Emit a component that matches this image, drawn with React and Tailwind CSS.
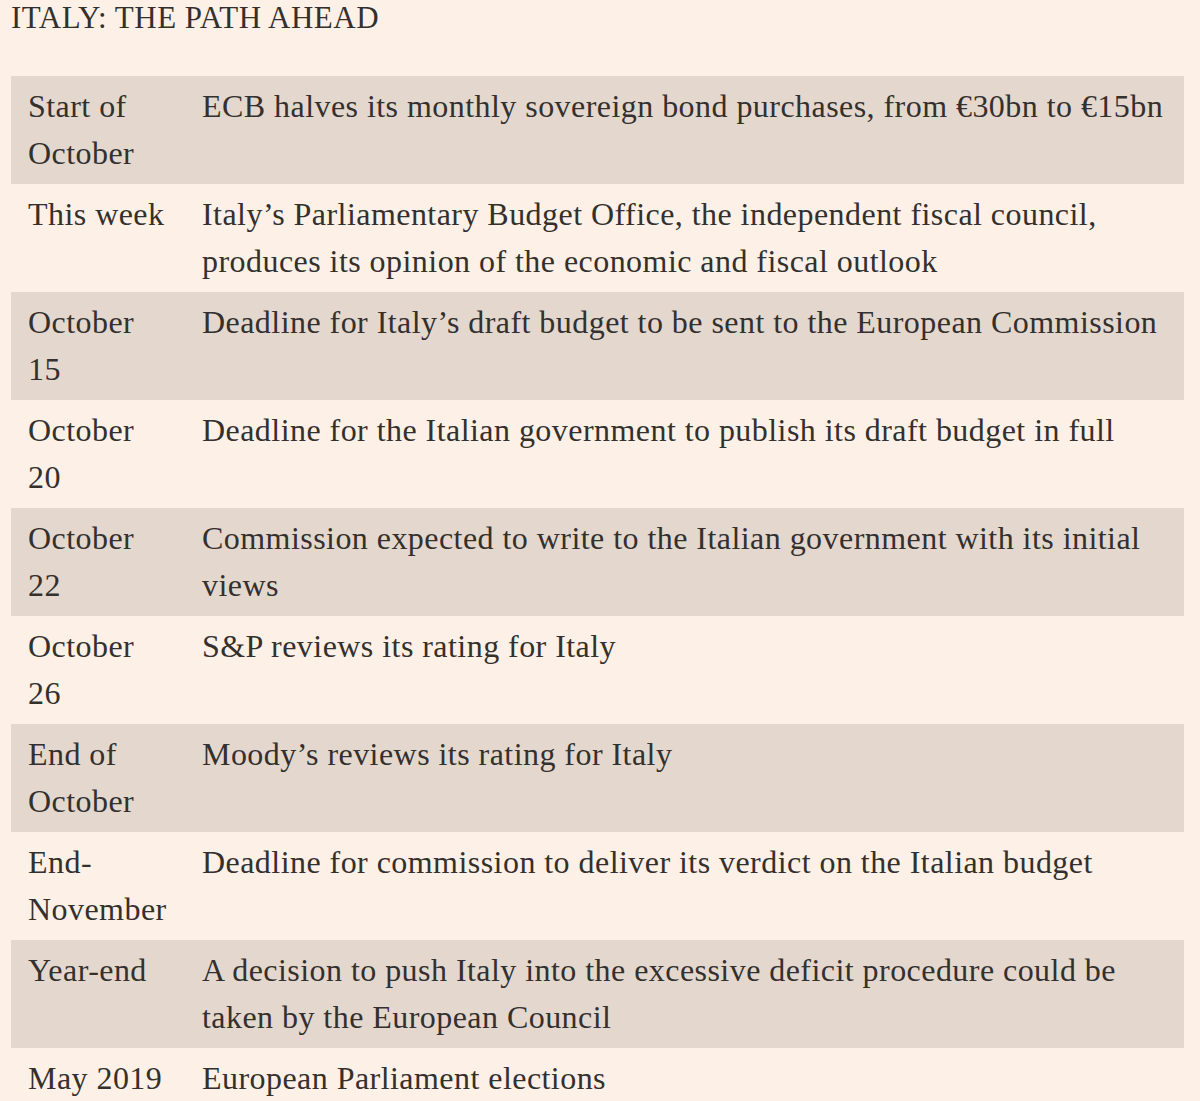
import React from "react";

const rows = [
  [["Start of", "October"], ["ECB halves its monthly sovereign bond purchases, from €30bn to €15bn"]],
  [["This week"], ["Italy’s Parliamentary Budget Office, the independent fiscal council,", "produces its opinion of the economic and fiscal outlook"]],
  [["October", "15"], ["Deadline for Italy’s draft budget to be sent to the European Commission"]],
  [["October", "20"], ["Deadline for the Italian government to publish its draft budget in full"]],
  [["October", "22"], ["Commission expected to write to the Italian government with its initial", "views"]],
  [["October", "26"], ["S&P reviews its rating for Italy"]],
  [["End of", "October"], ["Moody’s reviews its rating for Italy"]],
  [["End-", "November"], ["Deadline for commission to deliver its verdict on the Italian budget"]],
  [["Year-end"], ["A decision to push Italy into the excessive deficit procedure could be", "taken by the European Council"]],
  [["May 2019"], ["European Parliament elections"]],
];

function Lines({ lines }) {
  return lines.map((l, i) => (
    <React.Fragment key={i}>
      {i > 0 && <br />}
      {l}
    </React.Fragment>
  ));
}

export default function App() {
  return (
    <div
      className="w-[1200px] h-[1101px] overflow-hidden bg-[#fdf0e6] text-[#33302e] pl-[11px] pr-[16px]"
      style={{ fontFamily: '"Liberation Serif", "DejaVu Serif", serif' }}
    >
      <div className="text-[31px] leading-[30px] tracking-[0.5px] pt-[3px] h-[76px]">ITALY: THE PATH AHEAD</div>
      <div className="flex flex-col">
        {rows.map(([d, t], i) => (
          <div
            key={i}
            className={`flex text-[32px] leading-[47px] tracking-[0.45px] py-[7px] h-[108px] ${i % 2 === 0 ? "bg-[#e4d8ce]" : ""}`}
          >
            <div className="w-[191px] shrink-0 pl-[17px] whitespace-nowrap">
              <Lines lines={d} />
            </div>
            <div className="flex-1 whitespace-nowrap">
              <Lines lines={t} />
            </div>
          </div>
        ))}
      </div>
    </div>
  );
}
